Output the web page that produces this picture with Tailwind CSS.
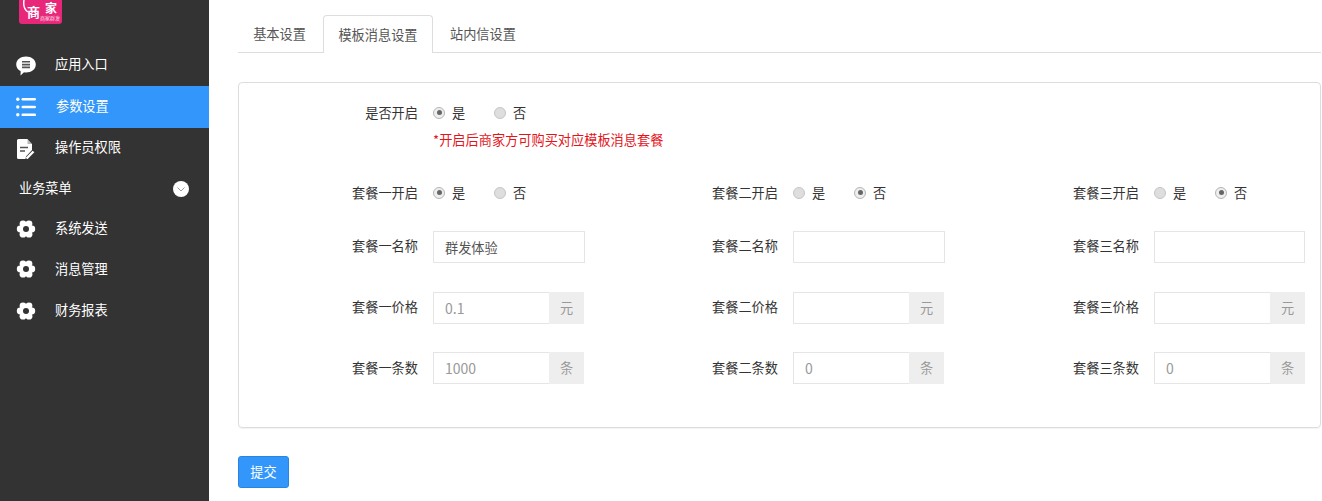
<!DOCTYPE html>
<html lang="zh">
<head>
<meta charset="utf-8">
<script src="https://cdn.jsdelivr.net/npm/@tailwindcss/browser@4"></script>
<title>模板消息设置</title>
</head>
<body class="bg-white overflow-hidden font-['Noto_Sans_CJK_SC','Liberation_Sans',sans-serif] text-[13.2px] text-[#333]">
<div class="flex h-[501px] w-[1322px] overflow-hidden">
  <aside class="w-[209px] h-full bg-[#333333] text-white shrink-0 flex flex-col">
    <div class="h-[44px] pl-[19px]">
      <div class="relative w-[43px] h-[24px] bg-[#e8277a] rounded-b-[3px] overflow-hidden">
        <svg class="absolute left-0 top-0 w-[43px] h-[24px]" viewBox="0 0 43 24"><path fill="none" stroke="#fff" stroke-width="1.500" d="M5 0c-1 6 1 10 4 12"/></svg>
        <span class="absolute left-[8px] top-[4px] text-[13px] leading-[16px] font-bold text-white">商</span>
        <span class="absolute left-[26px] top-[1px] text-[12px] leading-[14px] font-bold text-white">家</span>
        <span class="absolute left-[21px] top-[15px] text-[5px] leading-[6px] whitespace-nowrap text-white/80">商家群发</span>
      </div>
    </div>
    <a class="flex items-center h-[42px] pl-[16px]">
      <svg class="w-[20px] h-[20px] mr-[19px] mt-[1px]" viewBox="0 0 20 20"><path fill="#fff" d="M10 .5c5.400 0 9.800 3.200 9.800 8s-4.400 8-9.800 8c-.7 0-1.400 0-2-.2L4.500 19.500l.2-4.300C2 13.800.2 11.400.2 8.500c0-4.800 4.400-8 9.800-8z"/><path stroke="#555" stroke-width="1.600" d="M6 5.800h8M6 8.600h8M6 11.400h8"/></svg>
      <span class="mb-[2px]">应用入口</span>
    </a>
    <a class="flex items-center h-[42px] pl-[16px] bg-[#3296fa]">
      <svg class="w-[20px] h-[20px] mr-[20px]" viewBox="0 0 20 20"><g fill="#fff"><circle cx="1.800" cy="2.200" r="1.700"/><circle cx="1.800" cy="10" r="1.700"/><circle cx="1.800" cy="17.800" r="1.700"/><rect x="5.500" y="1" width="14.500" height="2.500" rx="1.200"/><rect x="5.500" y="8.800" width="14.500" height="2.500" rx="1.200"/><rect x="5.500" y="16.600" width="14.500" height="2.500" rx="1.200"/></g></svg>
      <span class="mb-[2px]">参数设置</span>
    </a>
    <a class="flex items-center h-[39px] pl-[16px]">
      <svg class="w-[20px] h-[20px] mr-[19px] mt-[2px]" viewBox="0 0 20 20"><path fill="#fff" d="M2.500 0h9l4.500 5v6l-6 6.500-.5 2.500H2.500A1.500 1.500 0 0 1 1 18.500v-17A1.500 1.500 0 0 1 2.500 0z"/><path stroke="#555" stroke-width="1.500" d="M4 8.500h8M4 12h5"/><path fill="#333" d="M11.500 0v5H16z" opacity=".35"/><path stroke="#fff" stroke-width="2.400" d="M10.500 19.500l7-7"/></svg>
      <span class="mb-[2px]">操作员权限</span>
    </a>
    <div class="flex items-center h-[41px] pl-[19px]">
      <span class="flex-1">业务菜单</span>
      <span class="w-[16px] h-[16px] mr-[20px] mt-[3px] rounded-full bg-white flex items-center justify-center">
        <svg class="w-[8px] h-[5px]" viewBox="0 0 8 5"><path fill="none" stroke="#999" stroke-width="1" d="M.5.500 4 4 7.500.5"/></svg>
      </span>
    </div>
    <a class="flex items-center h-[40px] pl-[16px]">
      <svg class="w-[20px] h-[20px] mr-[19px] mt-[2px]" viewBox="0 0 20 20"><g fill="#fff"><circle cx="15.800" cy="10" r="3.400"/><circle cx="13" cy="4.800" r="3.400"/><circle cx="7" cy="4.800" r="3.400"/><circle cx="4.200" cy="10" r="3.400"/><circle cx="7" cy="15.200" r="3.400"/><circle cx="13" cy="15.200" r="3.400"/><circle cx="10" cy="10" r="6"/></g><circle cx="10" cy="10" r="3" fill="#333"/></svg>
      <span>系统发送</span>
    </a>
    <a class="flex items-center h-[42px] pl-[16px]">
      <svg class="w-[20px] h-[20px] mr-[19px]" viewBox="0 0 20 20"><g fill="#fff"><circle cx="15.800" cy="10" r="3.400"/><circle cx="13" cy="4.800" r="3.400"/><circle cx="7" cy="4.800" r="3.400"/><circle cx="4.200" cy="10" r="3.400"/><circle cx="7" cy="15.200" r="3.400"/><circle cx="13" cy="15.200" r="3.400"/><circle cx="10" cy="10" r="6"/></g><circle cx="10" cy="10" r="3" fill="#333"/></svg>
      <span>消息管理</span>
    </a>
    <a class="flex items-center h-[40px] pl-[16px]">
      <svg class="w-[20px] h-[20px] mr-[19px] mt-[2px]" viewBox="0 0 20 20"><g fill="#fff"><circle cx="15.800" cy="10" r="3.400"/><circle cx="13" cy="4.800" r="3.400"/><circle cx="7" cy="4.800" r="3.400"/><circle cx="4.200" cy="10" r="3.400"/><circle cx="7" cy="15.200" r="3.400"/><circle cx="13" cy="15.200" r="3.400"/><circle cx="10" cy="10" r="6"/></g><circle cx="10" cy="10" r="3" fill="#333"/></svg>
      <span>财务报表</span>
    </a>
  </aside>

  <main class="w-[1083px] ml-[29px] shrink-0 pt-[15px]">
    <nav class="flex h-[38px] border-b border-[#ddd]">
      <a class="h-[37px] w-[83px] mr-[2px] flex items-center justify-center text-[#555]">基本设置</a>
      <a class="h-[38px] w-[110px] mr-[2px] flex items-center justify-center text-[#555] bg-white border border-[#ddd] border-b-0 rounded-t-[4px]">模板消息设置</a>
      <a class="h-[37px] px-[15px] flex items-center text-[#555]">站内信设置</a>
    </nav>

    <form class="mt-[29px] h-[346px] border border-[#ddd] rounded-[4px] shadow-[0_1px_1px_rgba(0,0,0,0.05)] pl-[104px] pt-[15px]">
      <div class="flex items-center h-[30px]">
        <label class="w-[75px] text-right mr-[15px]">是否开启</label>
        <div class="flex items-center w-[152px]">
          <span class="w-[12px] h-[12px] rounded-full bg-[#eee] border border-[#b5b5b5] flex items-center justify-center"><span class="w-[5px] h-[5px] rounded-full bg-[#666]"></span></span>
          <span class="ml-[7px] w-[42px]">是</span>
          <span class="w-[12px] h-[12px] rounded-full bg-[#dedede] border border-[#c5c5c5]"></span>
          <span class="ml-[7px]">否</span>
        </div>
      </div>
      <div class="h-[20px] mt-[2px] ml-[90px] flex items-center text-[#e4141b]">*开启后商家方可购买对应模板消息套餐</div>

      <div class="grid grid-cols-[360px_361px_1fr] h-[30px] mt-[28px] items-center">
        <div class="flex items-center">
          <label class="w-[75px] text-right mr-[15px]">套餐一开启</label>
          <span class="w-[12px] h-[12px] rounded-full bg-[#eee] border border-[#b5b5b5] flex items-center justify-center"><span class="w-[5px] h-[5px] rounded-full bg-[#666]"></span></span>
          <span class="ml-[7px] w-[42px]">是</span>
          <span class="w-[12px] h-[12px] rounded-full bg-[#dedede] border border-[#c5c5c5]"></span>
          <span class="ml-[7px]">否</span>
        </div>
        <div class="flex items-center">
          <label class="w-[75px] text-right mr-[15px]">套餐二开启</label>
          <span class="w-[12px] h-[12px] rounded-full bg-[#dedede] border border-[#c5c5c5]"></span>
          <span class="ml-[7px] w-[42px]">是</span>
          <span class="w-[12px] h-[12px] rounded-full bg-[#eee] border border-[#b5b5b5] flex items-center justify-center"><span class="w-[5px] h-[5px] rounded-full bg-[#666]"></span></span>
          <span class="ml-[7px]">否</span>
        </div>
        <div class="flex items-center">
          <label class="w-[75px] text-right mr-[15px]">套餐三开启</label>
          <span class="w-[12px] h-[12px] rounded-full bg-[#dedede] border border-[#c5c5c5]"></span>
          <span class="ml-[7px] w-[42px]">是</span>
          <span class="w-[12px] h-[12px] rounded-full bg-[#eee] border border-[#b5b5b5] flex items-center justify-center"><span class="w-[5px] h-[5px] rounded-full bg-[#666]"></span></span>
          <span class="ml-[7px]">否</span>
        </div>
      </div>

      <div class="grid grid-cols-[360px_361px_1fr] h-[32px] mt-[23px] items-center">
        <div class="flex items-center">
          <label class="w-[75px] text-right mr-[15px] mb-[2px]">套餐一名称</label>
          <div class="w-[152px] h-[32px] border border-[#e5e5e5] flex items-center pl-[11px] pt-[2px] text-[#555]">群发体验</div>
        </div>
        <div class="flex items-center">
          <label class="w-[75px] text-right mr-[15px] mb-[2px]">套餐二名称</label>
          <div class="w-[152px] h-[32px] border border-[#e5e5e5]"></div>
        </div>
        <div class="flex items-center">
          <label class="w-[75px] text-right mr-[15px] mb-[2px]">套餐三名称</label>
          <div class="w-[151px] h-[32px] border border-[#e5e5e5]"></div>
        </div>
      </div>

      <div class="grid grid-cols-[360px_361px_1fr] h-[32px] mt-[29px] items-center">
        <div class="flex items-center">
          <label class="w-[75px] text-right mr-[15px] mb-[2px]">套餐一价格</label>
          <div class="w-[116px] h-[32px] border border-[#e5e5e5] border-r-0 flex items-center pl-[11px] text-[14px] text-[#999]">0.1</div>
          <div class="w-[35px] h-[32px] bg-[#eeeeee] flex items-center justify-center text-[#999]">元</div>
        </div>
        <div class="flex items-center">
          <label class="w-[75px] text-right mr-[15px] mb-[2px]">套餐二价格</label>
          <div class="w-[116px] h-[32px] border border-[#e5e5e5] border-r-0"></div>
          <div class="w-[35px] h-[32px] bg-[#eeeeee] flex items-center justify-center text-[#999]">元</div>
        </div>
        <div class="flex items-center">
          <label class="w-[75px] text-right mr-[15px] mb-[2px]">套餐三价格</label>
          <div class="w-[116px] h-[32px] border border-[#e5e5e5] border-r-0"></div>
          <div class="w-[35px] h-[32px] bg-[#eeeeee] flex items-center justify-center text-[#999]">元</div>
        </div>
      </div>

      <div class="grid grid-cols-[360px_361px_1fr] h-[32px] mt-[28px] items-center">
        <div class="flex items-center">
          <label class="w-[75px] text-right mr-[15px]">套餐一条数</label>
          <div class="w-[116px] h-[32px] border border-[#e5e5e5] border-r-0 flex items-center pl-[11px] text-[14px] text-[#999]">1000</div>
          <div class="w-[35px] h-[32px] bg-[#eeeeee] flex items-center justify-center text-[#999]">条</div>
        </div>
        <div class="flex items-center">
          <label class="w-[75px] text-right mr-[15px]">套餐二条数</label>
          <div class="w-[116px] h-[32px] border border-[#e5e5e5] border-r-0 flex items-center pl-[11px] text-[14px] text-[#999]">0</div>
          <div class="w-[35px] h-[32px] bg-[#eeeeee] flex items-center justify-center text-[#999]">条</div>
        </div>
        <div class="flex items-center">
          <label class="w-[75px] text-right mr-[15px]">套餐三条数</label>
          <div class="w-[116px] h-[32px] border border-[#e5e5e5] border-r-0 flex items-center pl-[11px] text-[14px] text-[#999]">0</div>
          <div class="w-[35px] h-[32px] bg-[#eeeeee] flex items-center justify-center text-[#999]">条</div>
        </div>
      </div>
    </form>

    <button class="mt-[28px] w-[51px] h-[32px] bg-[#3296fa] border border-[#2a85e0] rounded-[3px] text-white flex items-center justify-center">提交</button>
  </main>
</div>
</body>
</html>
